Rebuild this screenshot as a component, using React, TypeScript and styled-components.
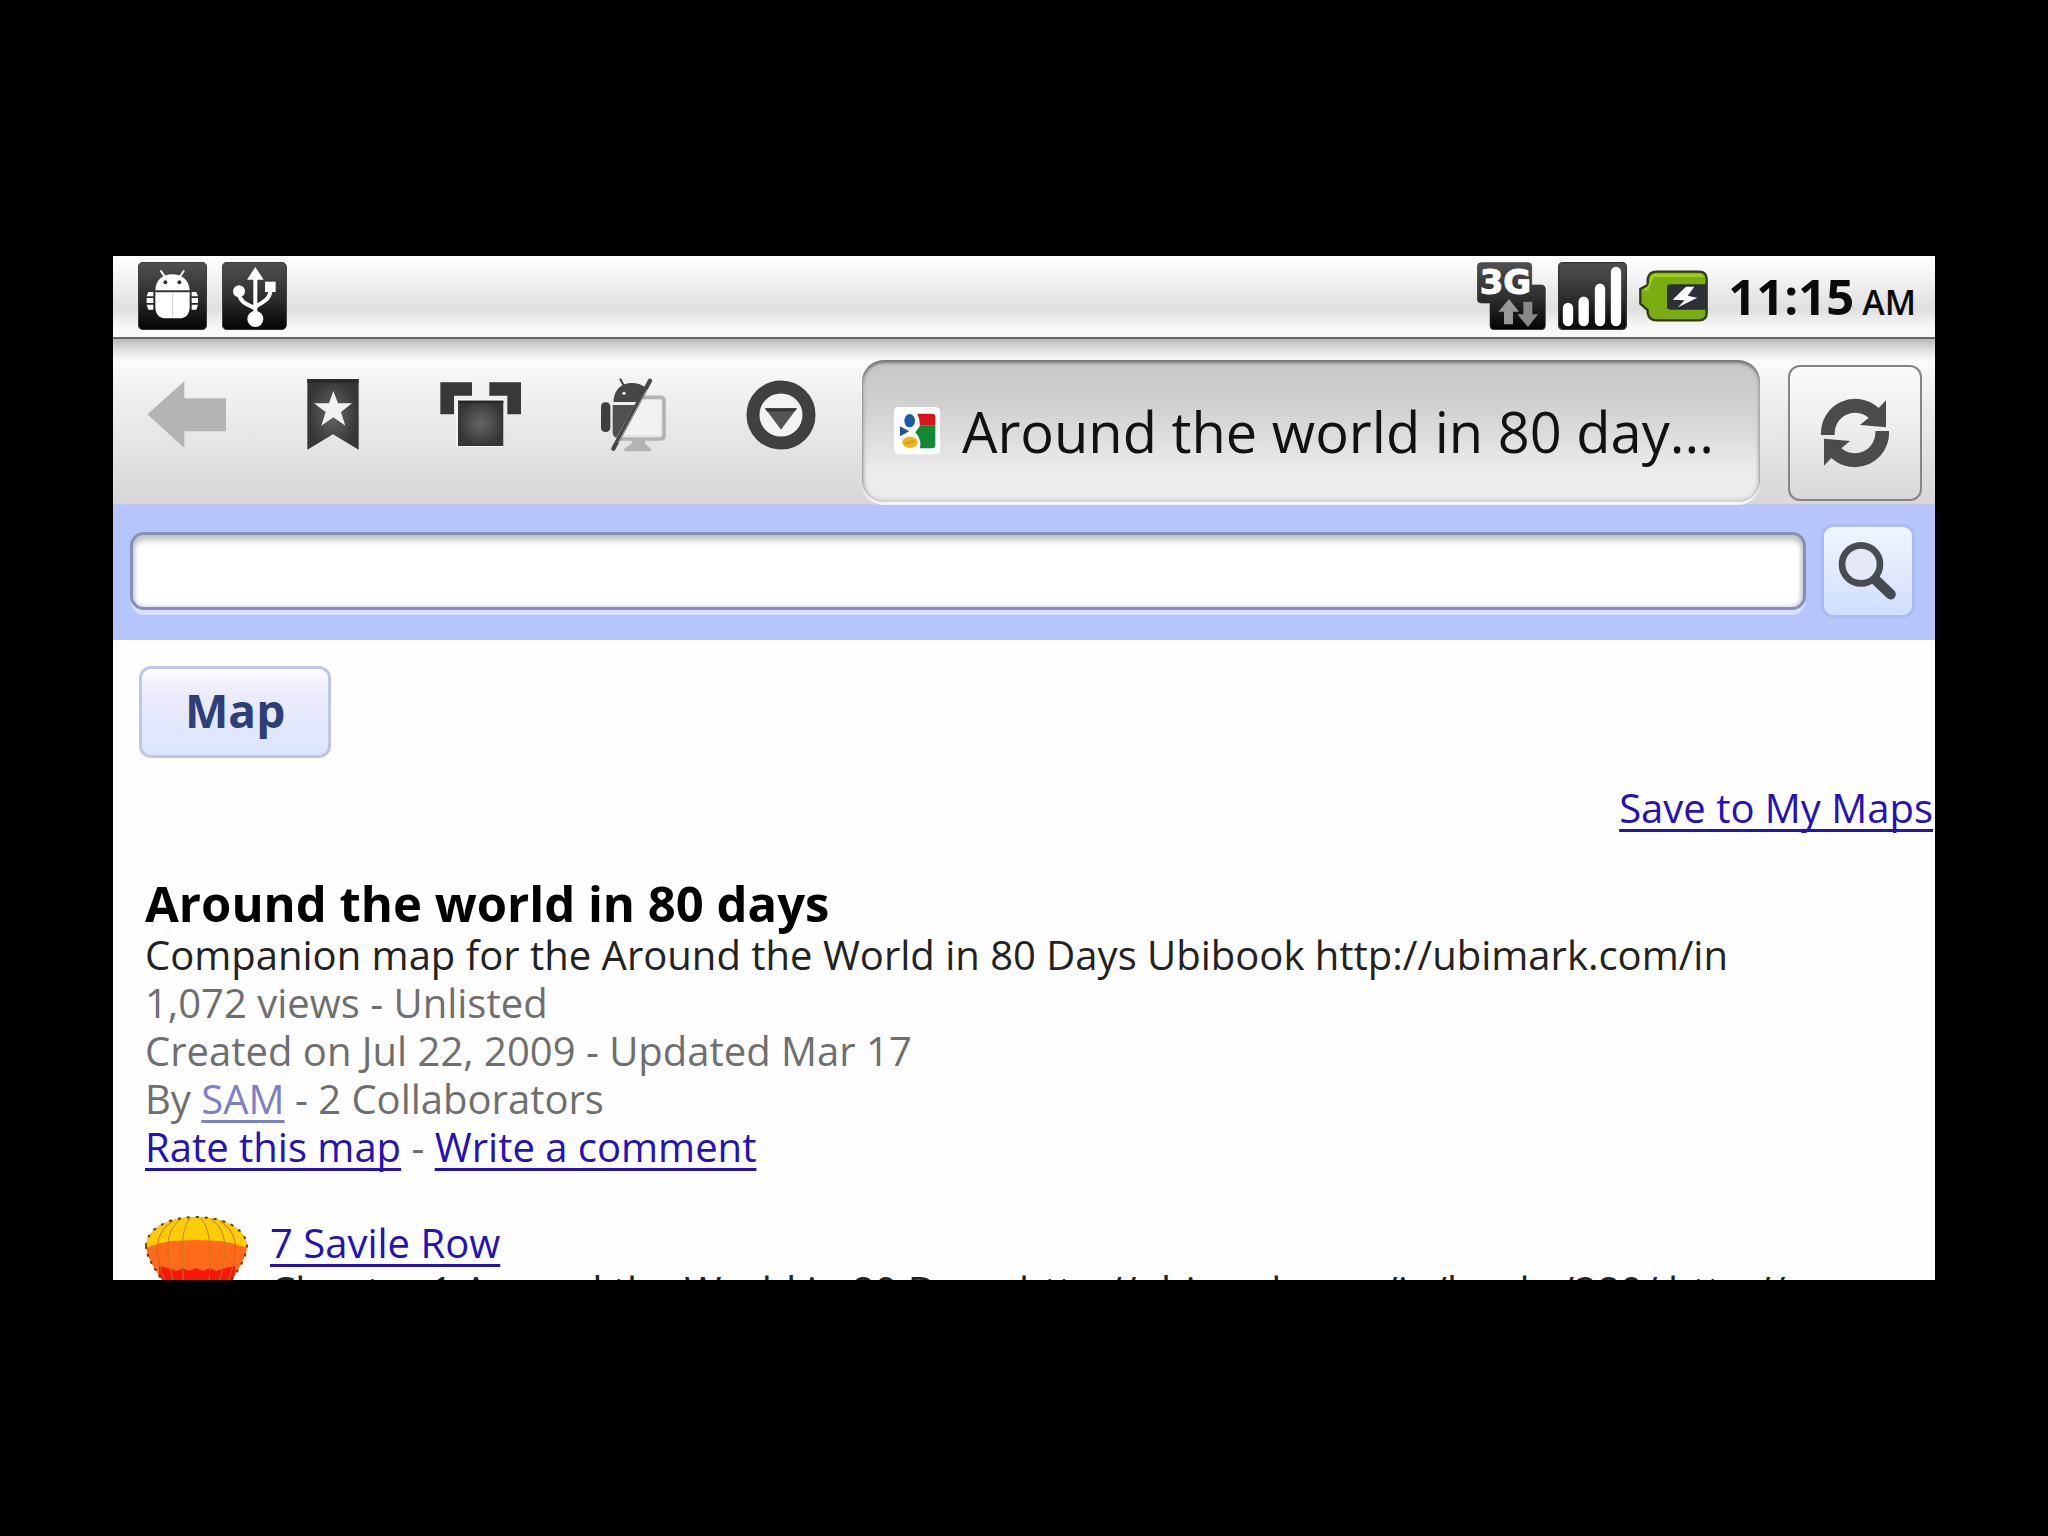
import React from "react";
import styled, { createGlobalStyle } from "styled-components";

const GlobalStyle = createGlobalStyle`
  *, *::before, *::after { box-sizing: border-box; }
  body { margin: 0; background: #000; font-family: "Open Sans", "Noto Sans", sans-serif; }
  h1, p { margin: 0; }
  button, input { font-family: inherit; }
  svg { display: block; }
`;

const Backdrop = styled.div`
  display: flex;
  height: 100vh;
  padding: 256px 113px;
  background: #000;
`;

const Screen = styled.div`
  flex: 1;
  min-width: 0;
  display: flex;
  flex-direction: column;
  overflow: hidden;
  background: #fefefe;
`;

const StatusBar = styled.header`
  flex: none;
  display: flex;
  align-items: center;
  justify-content: space-between;
  height: 83px;
  padding: 0 19px 2px 25px;
  border-bottom: 2px solid #666;
  background: linear-gradient(#fff 0%, #f4f4f4 25%, #dfdfdf 66%, #f6f6f6 86%, #fafafa 100%);
`;

const StatusGroup = styled.div<{ $gap: number }>`
  display: flex;
  align-items: center;
  gap: ${(p) => p.$gap}px;
`;

const Clock = styled.time`
  display: flex;
  align-items: baseline;
  gap: 8px;
  margin-left: 8px;
  padding-top: 6px;
  font-size: 49px;
  line-height: 64px;
  font-weight: 700;
  color: #0a0a0a;
`;

const Meridiem = styled.span`
  font-size: 34px;
  font-weight: 600;
`;

const Toolbar = styled.nav`
  flex: none;
  display: flex;
  height: 166px;
  padding: 20px 13px 3px 0;
  background: linear-gradient(#b9b9b9 0, #dedede 10px, #fbfbfb 22px, #f4f4f4 40px, #d8d8d8 158px, #dad7e2 164px, #b9c9e8 166px);
`;

const Actions = styled.div`
  flex: none;
  display: grid;
  grid-template-columns: repeat(5, 148px);
  align-items: center;
  padding-bottom: 32px;
`;

const ActionButton = styled.button`
  display: flex;
  justify-content: center;
  padding: 0;
  border: 0;
  background: none;
  color: #424242;
`;

const AddressTab = styled.button`
  flex: 1;
  min-width: 0;
  display: flex;
  align-items: center;
  gap: 22px;
  margin: 1px 28px 0 9px;
  padding: 0 24px 0 32px;
  border: 0;
  border-radius: 22px;
  background: linear-gradient(#c6c6c6, #d2d2d2 35%, #ecebed 78%, #eeecee 95%, #dedede);
  box-shadow: inset 0 3px 3px #777, inset 3px 0 5px -2px #a5a5a5, inset -3px 0 5px -2px #b5b5b5, 0 3px 1px #f6f6fa;
  text-align: left;
`;

const TabTitle = styled.span`
  overflow: hidden;
  white-space: nowrap;
  font-size: 56px;
  line-height: 80px;
  color: #111;
`;

const RefreshButton = styled.button`
  flex: none;
  display: grid;
  place-items: center;
  width: 134px;
  margin: 6px 0 1px;
  padding: 0;
  border: 2px solid #858585;
  border-radius: 12px;
  background: linear-gradient(#fafafa, #efedf0 45%, #d9d8d8);
`;

const SearchForm = styled.form`
  flex: none;
  display: flex;
  align-items: center;
  gap: 15px;
  padding: 19px 20px 22px 17px;
  background: #b6c5fb;
`;

const SearchInput = styled.input`
  flex: 1;
  min-width: 0;
  height: 78px;
  padding: 0 16px;
  border: 3px solid #8590b5;
  border-radius: 14px;
  outline: 0;
  background: #fff;
  box-shadow: inset 0 6px 6px -1px #bfc2bd, inset 2px 0 4px #d5dbe6, inset -2px 0 4px #c9cfdc, 0 6px 0 -1px #d6e0fc;
  font-size: 40px;
`;

const SearchButton = styled.button`
  display: grid;
  place-items: center;
  width: 94px;
  height: 94px;
  padding: 0;
  border: 3px solid #abbcf0;
  border-radius: 12px;
  background: linear-gradient(#f0f6ff, #e1e9fb 50%, #d0dfff);
`;

const Page = styled.main`
  padding: 26px 0 0;
  font-size: 40px;
  line-height: 48px;
  color: #222;
`;

const MapButton = styled.button`
  display: block;
  height: 92px;
  margin-left: 26px;
  padding: 0 43px 4px;
  border: 3px solid #bfc6ea;
  border-radius: 12px;
  background: linear-gradient(#fbfbff, #ebebfb 30%, #dbe5ff);
  font-size: 46px;
  line-height: 56px;
  font-weight: 700;
  color: #2d3f78;
`;

const SaveRow = styled.p`
  margin: 26px 2px 43px 0;
  text-align: right;
`;

const PageLink = styled.a<{ $faded?: boolean }>`
  color: ${(p) => (p.$faded ? "#7f7fc8" : "#2511b8")};
  text-decoration: underline;
  text-decoration-thickness: 3px;
  text-underline-offset: 6px;
  text-decoration-skip-ink: none;
`;

const Details = styled.section`
  padding: 0 32px;
`;

const Heading = styled.h1`
  font-size: 49px;
  line-height: 56px;
  font-weight: 700;
  color: #000;
`;

const Meta = styled.p`
  color: #6f6f6f;
`;

const Place = styled.article`
  display: flex;
  gap: 22px;
  margin-top: 45px;
  padding: 0 32px;
`;

const PlaceText = styled.div`
  flex: 1;
  min-width: 0;
  padding-top: 3px;
  white-space: nowrap;
`;

const BugIcon = () => (
  <svg width="69" height="68" viewBox="115 65 207 204" aria-hidden="true">
    <defs>
      <linearGradient id="tile" x1="0" y1="0" x2="0" y2="1">
        <stop offset="0" stopColor="#505050" />
        <stop offset="0.55" stopColor="#2c2c2c" />
        <stop offset="1" stopColor="#020202" />
      </linearGradient>
    </defs>
    <rect x="116" y="66" width="205" height="202" rx="14" fill="url(#tile)" stroke="#333" strokeWidth="3" />
    <g fill="#fff">
      <path d="M167 150C168 118 190 102 218 102S268 118 270 150Z" />
      <path d="M167 156H270V200C270 222 258 234 240 234H197C179 234 167 222 167 200Z" />
      <path d="M184 92L196 110M252 92L240 110" stroke="#fff" strokeWidth="6" strokeLinecap="round" />
      <path d="M146 155H161V168H141ZM141 173H161V188H141ZM141 193H161V208H146ZM276 155H290L295 168H276ZM276 173H295V188H276ZM276 193H295L290 208H276Z" />
    </g>
    <circle cx="197" cy="126" r="6" fill="#333" />
    <circle cx="239" cy="126" r="6" fill="#333" />
    <path d="M219 158V232" stroke="#ccc" strokeWidth="3" />
  </svg>
);

const UsbIcon = () => (
  <svg width="65" height="68" viewBox="364 65 195 204" aria-hidden="true">
    <rect x="365" y="66" width="192" height="202" rx="14" fill="url(#tile)" stroke="#333" strokeWidth="3" />
    <g fill="#fff">
      <path d="M464 80L489 118H439Z" />
      <circle cx="415" cy="153" r="18" />
      <rect x="493" y="124" width="32" height="31" />
      <circle cx="464" cy="236" r="24" />
    </g>
    <path d="M464 110V230M415 158C417 186 440 192 464 204M509 150C510 176 486 184 464 200" fill="none" stroke="#fff" strokeWidth="12" />
  </svg>
);

const NetworkIcon = () => (
  <svg width="69" height="68" viewBox="109 65 207 204" role="img" aria-label="3G">
    <path d="M122 67H262Q273 67 273 78V134H302Q314 134 314 146V256Q314 268 302 268H160Q148 268 148 256V188H122Q110 188 110 176V79Q110 67 122 67Z" fill="url(#tile)" stroke="#333" strokeWidth="2" />
    <text x="117" y="160" fontFamily="DejaVu Sans" fontWeight="700" fontSize="102" fill="#fff" stroke="#fff" strokeWidth="3">3G</text>
    <path d="M205 176L235 214H217V252H190V214H173Z" fill="#999" />
    <path d="M262 260L292 222H275V184H248V222H230Z" fill="#888" />
  </svg>
);

const SignalIcon = () => (
  <svg width="69" height="68" viewBox="351 65 207 204" aria-hidden="true">
    <rect x="353" y="67" width="203" height="200" rx="12" fill="url(#tile)" stroke="#333" strokeWidth="4" />
    <path d="M381 203V242M428 184V242M477 145V242M525 95V242" stroke="#fff" strokeWidth="31" strokeLinecap="round" />
  </svg>
);

const BatteryIcon = () => (
  <svg width="69" height="52" viewBox="596 89 207 156" aria-hidden="true">
    <path d="M648 94H776Q799 94 799 116V218Q799 240 776 240H648Q626 240 622 218V209L600 190V146L622 134V116Q626 94 648 94Z" fill="#79ad12" stroke="#2e3a12" strokeWidth="7" />
    <path d="M648 100H776Q788 100 792 110H640L624 150H606Q626 140 628 122Q630 100 648 100Z" fill="#9bd01c" />
    <path d="M690 132H799V208H690Q680 208 680 198V142Q680 132 690 132Z" fill="#2c3138" />
    <path d="M737 139L697 178L733 180L713 201L771 172L742 166L762 139Z" fill="#fff" />
  </svg>
);

const BackIcon = () => (
  <svg width="80" height="70" viewBox="140 417 240 210" aria-hidden="true">
    <path d="M141 520L252 421V472H377V571H252V621Z" fill="#b4b4b4" />
  </svg>
);

const BookmarkIcon = () => (
  <svg width="58" height="74" viewBox="618 417 174 222" aria-hidden="true">
    <defs>
      <radialGradient id="glow">
        <stop offset="0" stopColor="#666" />
        <stop offset="1" stopColor="#363636" />
      </radialGradient>
    </defs>
    <path d="M622 420H776V632L699 586L622 632Z" fill="url(#glow)" />
    <path d="M622 420H776V432H622Z" fill="#2b2b2b" />
    <path d="M700 456L714 493H756L723 519L736 560L700 535L664 560L677 519L642 493H687Z" fill="#f2f2f2" />
  </svg>
);

const WindowsIcon = () => (
  <svg width="89" height="67" viewBox="57 152 267 201" aria-hidden="true">
    <path d="M61 156H156V196H102V252H61ZM208 156H303V252H262V196H208Z" fill="#383838" />
    <rect x="109" y="205" width="144" height="145" fill="#f6f6f6" />
    <rect x="114" y="211" width="136" height="136" fill="url(#glow)" />
    <path d="M114 211H250V219H114Z" fill="#292929" />
  </svg>
);

const DesktopToggleIcon = () => (
  <svg width="72" height="75" viewBox="526 135 216 225" aria-hidden="true">
    <path d="M640 196H722Q733 196 733 207V310Q733 321 722 321H600" fill="none" stroke="#b3b3b3" strokeWidth="11" />
    <path d="M636 320H676V336L694 350V358H614V350L636 336Z" fill="#b3b3b3" />
    <path d="M650 204H722V308H608Z" fill="#f2f2f2" />
    <path d="M581 210C583 173 605 153 636 153C652 153 665 157 677 166L650 210Z" fill="#454545" />
    <path d="M579 219H645L590 318Q579 314 579 300Z" fill="#505050" />
    <rect x="544" y="211" width="28" height="89" rx="13" fill="#3f3f3f" />
    <path d="M602 142L613 162" stroke="#444" strokeWidth="6" strokeLinecap="round" />
    <circle cx="613" cy="184" r="5" fill="#eee" />
    <path d="M691 146L581 350" stroke="#454545" strokeWidth="13" strokeLinecap="round" />
    <path d="M682 172L595 333" stroke="#aaa" strokeWidth="3" />
  </svg>
);

const MoreIcon = () => (
  <svg width="76" height="72" viewBox="962 145 228 216" aria-hidden="true">
    <circle cx="1082" cy="253" r="84" fill="#f3f3f3" stroke="#404040" strokeWidth="39" />
    <path d="M1034 233H1130L1082 297Z" fill="#555" />
    <path d="M1034 233H1130L1124 242H1040Z" fill="#333" />
  </svg>
);

const Favicon = () => (
  <svg width="46" height="48" viewBox="162 200 138 144" aria-hidden="true">
    <rect x="162" y="200" width="138" height="142" rx="14" fill="#fdfdfd" />
    <path d="M232 220H276Q286 220 286 230V256H240Q240 236 232 220Z" fill="#d9151c" />
    <path d="M240 256H286V314Q286 324 276 324H240Q246 298 226 276Z" fill="#128a35" />
    <ellipse cx="209" cy="241" rx="16" ry="20" fill="#1c58ae" />
    <path d="M180 258L208 273L180 288Z" fill="#2b4f98" />
    <ellipse cx="210" cy="306" rx="23" ry="17" fill="#f1b51c" />
    <path d="M197 309L222 302" stroke="#d6951a" strokeWidth="5" strokeLinecap="round" />
  </svg>
);

const refreshArrow =
  "M1143 583A103 103 0 0 1 1316 502L1338 479V560L1260 553L1286 531A62 62 0 0 0 1184 583Z";

const RefreshIcon = () => (
  <svg width="70" height="70" viewBox="1140 472 210 210" aria-hidden="true">
    <g fill="#4b4b4d">
      <path d={refreshArrow} />
      <path d={refreshArrow} transform="rotate(180 1245 577)" />
    </g>
  </svg>
);

const SearchIcon = () => (
  <svg width="60" height="60" viewBox="834 128 180 180" aria-hidden="true">
    <circle cx="903" cy="198" r="57" fill="#e4e9f5" stroke="#474b52" strokeWidth="20" />
    <path d="M948 246L992 288" stroke="#454a52" strokeWidth="31" strokeLinecap="round" />
  </svg>
);

const BalloonIcon = () => (
  <svg width="103" height="110" viewBox="0 0 103 110" aria-hidden="true">
    <defs>
      <clipPath id="envelope">
        <path d="M1 30C2 12 24 1 51 1S101 12 102 30C101 46 88 60 78 78L62 104H42L26 78C16 60 2 46 1 30Z" />
      </clipPath>
    </defs>
    <g clipPath="url(#envelope)">
      <rect width="103" height="110" fill="#ff6a1c" />
      <path d="M0 0H103V32L90 28L76 25L51 24L26 25L12 28L0 32Z" fill="#ffcd08" />
      <path d="M14 50L26 53L32 55L38 52L44 55L51 52L58 55L65 52L71 55L77 53L90 50V110H14Z" fill="#fb1507" />
      <path d="M45 2C34 18 36 40 42 104M56 2C68 18 67 40 60 104M36 3C16 18 20 44 40 104M66 3C87 18 83 44 62 104" fill="none" stroke="#c27a10" strokeWidth="1" />
      <path d="M28 5C6 20 6 40 36 104M75 5C97 20 97 40 66 104" fill="none" stroke="#d8660c" strokeWidth="1" />
    </g>
    <path d="M1 30C2 12 24 1 51 1S101 12 102 30C101 46 88 60 78 78" fill="none" stroke="#5d4310" strokeWidth="2" strokeDasharray="3 6" />
    <path d="M1 30C2 46 16 60 26 78" fill="none" stroke="#7d3010" strokeWidth="2" strokeDasharray="3 5" />
  </svg>
);

const actions = [
  { label: "Back", Icon: BackIcon },
  { label: "Bookmarks", Icon: BookmarkIcon },
  { label: "Windows", Icon: WindowsIcon },
  { label: "Toggle desktop view", Icon: DesktopToggleIcon },
  { label: "More", Icon: MoreIcon },
];

export default function App() {
  return (
    <>
      <GlobalStyle />
      <Backdrop>
        <Screen>
          <StatusBar>
            <StatusGroup $gap={15}>
              <BugIcon />
              <UsbIcon />
            </StatusGroup>
            <StatusGroup $gap={12}>
              <NetworkIcon />
              <SignalIcon />
              <BatteryIcon />
              <Clock>
                11:15<Meridiem>AM</Meridiem>
              </Clock>
            </StatusGroup>
          </StatusBar>

          <Toolbar>
            <Actions>
              {actions.map(({ label, Icon }) => (
                <ActionButton key={label} type="button" aria-label={label}>
                  <Icon />
                </ActionButton>
              ))}
            </Actions>
            <AddressTab type="button">
              <Favicon />
              <TabTitle>Around the world in 80 day...</TabTitle>
            </AddressTab>
            <RefreshButton type="button" aria-label="Refresh">
              <RefreshIcon />
            </RefreshButton>
          </Toolbar>

          <SearchForm onSubmit={(e) => e.preventDefault()}>
            <SearchInput type="text" aria-label="Search maps" />
            <SearchButton type="submit" aria-label="Search">
              <SearchIcon />
            </SearchButton>
          </SearchForm>

          <Page>
            <MapButton type="button">Map</MapButton>
            <SaveRow>
              <PageLink href="#save">Save to My Maps</PageLink>
            </SaveRow>
            <Details>
              <Heading>Around the world in 80 days</Heading>
              <p>Companion map for the Around the World in 80 Days Ubibook http://ubimark.com/in</p>
              <Meta>1,072 views - Unlisted</Meta>
              <Meta>Created on Jul 22, 2009 - Updated Mar 17</Meta>
              <Meta>
                By <PageLink $faded href="#sam">SAM</PageLink> - 2 Collaborators
              </Meta>
              <Meta>
                <PageLink href="#rate">Rate this map</PageLink> - <PageLink href="#comment">Write a comment</PageLink>
              </Meta>
            </Details>
            <Place>
              <BalloonIcon />
              <PlaceText>
                <PageLink href="#savile-row">7 Savile Row</PageLink>
                <p>Chapter 1 Around the World in 80 Days: http://ubimark.com/in/books/280/ http://</p>
              </PlaceText>
            </Place>
          </Page>
        </Screen>
      </Backdrop>
    </>
  );
}
